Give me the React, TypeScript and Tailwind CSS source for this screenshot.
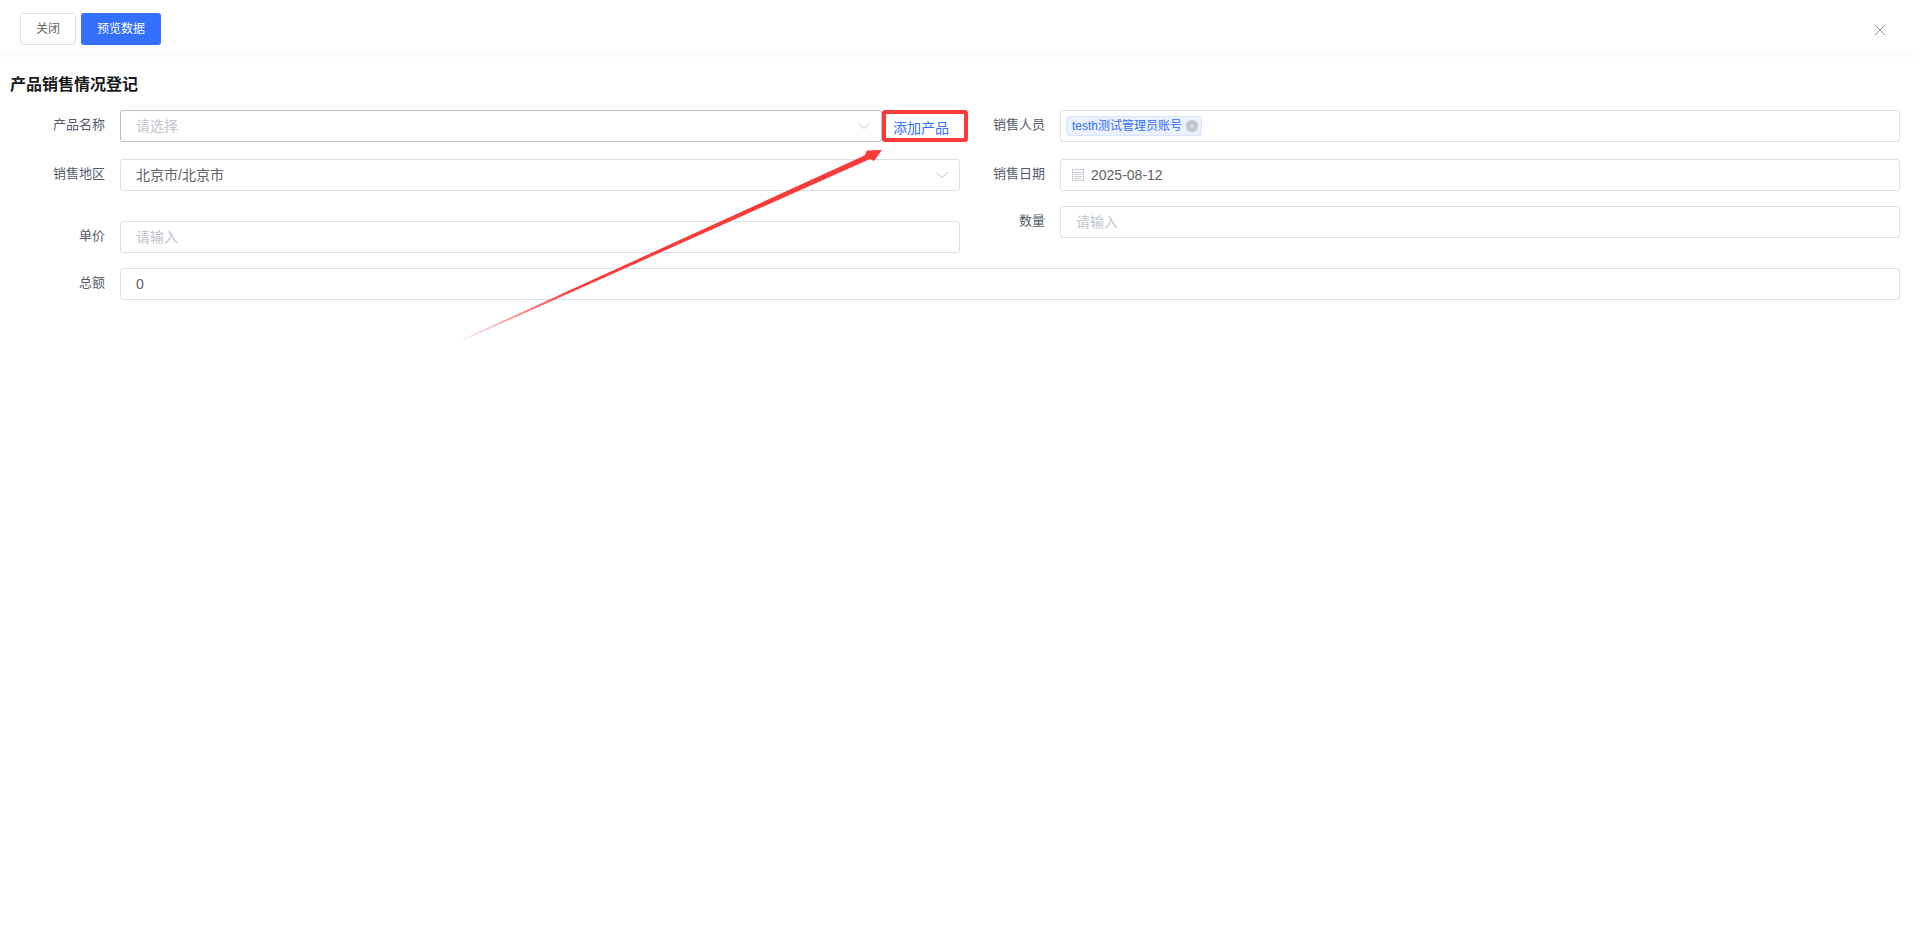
import { X } from "lucide-react";

const FONT = "font-['Liberation_Sans','Noto_Sans_CJK_SC',sans-serif]";

function Chevron() {
  return (
    <svg width="14" height="14" viewBox="0 0 14 14" fill="none" className="shrink-0">
      <path d="M1.5 4.5 7 9.5l5.5-5" stroke="#c0c4cc" strokeWidth="1" />
    </svg>
  );
}

function CalendarIcon() {
  return (
    <svg width="14" height="14" viewBox="0 0 14 14" fill="none" className="shrink-0">
      <rect x="1.5" y="1.5" width="11" height="11" fill="#fff" stroke="#c8ccd3" />
      <path d="M1.5 4.5h11M3 6.5h8M3 8.5h8M3 10.5h8" stroke="#c8ccd3" />
    </svg>
  );
}

function Field({ label, labelWidth, children }: { label: string; labelWidth: string; children: React.ReactNode }) {
  return (
    <div className="flex h-8 items-center">
      <label className={`${labelWidth} shrink-0 pb-[2px] text-right text-[13px] text-[#555b6b]`}>{label}</label>
      <div className="ml-[15px] flex h-8 min-w-0 flex-1">{children}</div>
    </div>
  );
}

function Box({ children, active }: { children: React.ReactNode; active?: boolean }) {
  return (
    <div
      className={`flex h-8 w-full items-center rounded-[3px] border bg-white pl-[15px] pr-[10px] text-sm text-[#606266] ${
        active ? "border-[#b8bcc6]" : "border-[#dcdfe6]"
      }`}
    >
      {children}
    </div>
  );
}

export default function App() {
  return (
    <div className={`${FONT} relative h-[929px] w-full overflow-hidden bg-white`}>
      <div className="flex h-[53px] items-start gap-[5px] bg-white pl-5 pt-[13px] shadow-[0_2px_6px_rgba(0,0,0,0.025)]">
        <button className="h-8 w-[56px] rounded-[3px] border border-[#dcdfe6] bg-white text-xs text-[#606266]">关闭</button>
        <button className="h-8 w-[80px] rounded-[3px] bg-[#3370ff] text-xs text-white">预览数据</button>
        <X className="ml-auto mr-[29px] mt-[7px] text-[#83868d]" size={20} strokeWidth={1} />
      </div>

      <h2 className="ml-[10px] mt-[23px] text-base font-bold leading-[18px] text-[#17181a]">产品销售情况登记</h2>

      <div className="mt-[16px] flex pr-[19px]">
        <div className="flex w-[960px] flex-col">
          <Field label="产品名称" labelWidth="w-[105px]">
            <div className="w-[762px] shrink-0">
              <Box active>
                <span className="flex-1 text-[#c0c4cc]">请选择</span>
                <Chevron />
              </Box>
            </div>
            <button className="relative w-[78px] shrink-0 pl-[11px] pt-[3px] text-left text-sm text-[#3370ff]">
              添加产品
              <span className="absolute left-0 top-0 h-8 w-[86px] rounded-[3px] border-[4px] border-[#fb3b3b]" />
            </button>
          </Field>
          <div className="mt-[17px]">
            <Field label="销售地区" labelWidth="w-[105px]">
              <Box>
                <span className="flex-1">北京市/北京市</span>
                <Chevron />
              </Box>
            </Field>
          </div>
          <div className="mt-[30px]">
            <Field label="单价" labelWidth="w-[105px]">
              <Box>
                <span className="text-[#c0c4cc]">请输入</span>
              </Box>
            </Field>
          </div>
        </div>

        <div className="flex flex-1 flex-col">
          <Field label="销售人员" labelWidth="w-[85px]">
            <Box>
              <span className="-ml-[10px] flex h-5 items-center gap-1 rounded-[3px] border border-[#d9e5ff] bg-[#ebf1ff] pl-[5px] pr-[3px] text-xs text-[#3370ff]">
                testh测试管理员账号
                <span className="flex h-3 w-3 items-center justify-center rounded-full bg-[#c0c4cc]">
                  <X size={8} strokeWidth={2} className="text-white" />
                </span>
              </span>
            </Box>
          </Field>
          <div className="mt-[17px]">
            <Field label="销售日期" labelWidth="w-[85px]">
              <Box>
                <span className="-ml-[5px] mr-[6px]">
                  <CalendarIcon />
                </span>
                <span>2025-08-12</span>
              </Box>
            </Field>
          </div>
          <div className="mt-[15px]">
            <Field label="数量" labelWidth="w-[85px]">
              <Box>
                <span className="text-[#c0c4cc]">请输入</span>
              </Box>
            </Field>
          </div>
        </div>
      </div>

      <div className="mt-[15px] pr-[19px]">
        <Field label="总额" labelWidth="w-[105px]">
          <Box>0</Box>
        </Field>
      </div>

      <svg className="pointer-events-none absolute left-0 top-0" width="1919" height="929" fill="none">
        <defs>
          <linearGradient id="arrowFade" gradientUnits="userSpaceOnUse" x1="462" y1="340" x2="570" y2="290">
            <stop offset="0" stopColor="#fb3b3b" stopOpacity="0.1" />
            <stop offset="1" stopColor="#fb3b3b" />
          </linearGradient>
        </defs>
        <path d="M462 339.5 864.5 155.5 867 150.5 882 150 874 161 870 159 463 340.5Z" fill="url(#arrowFade)" />
      </svg>
    </div>
  );
}
